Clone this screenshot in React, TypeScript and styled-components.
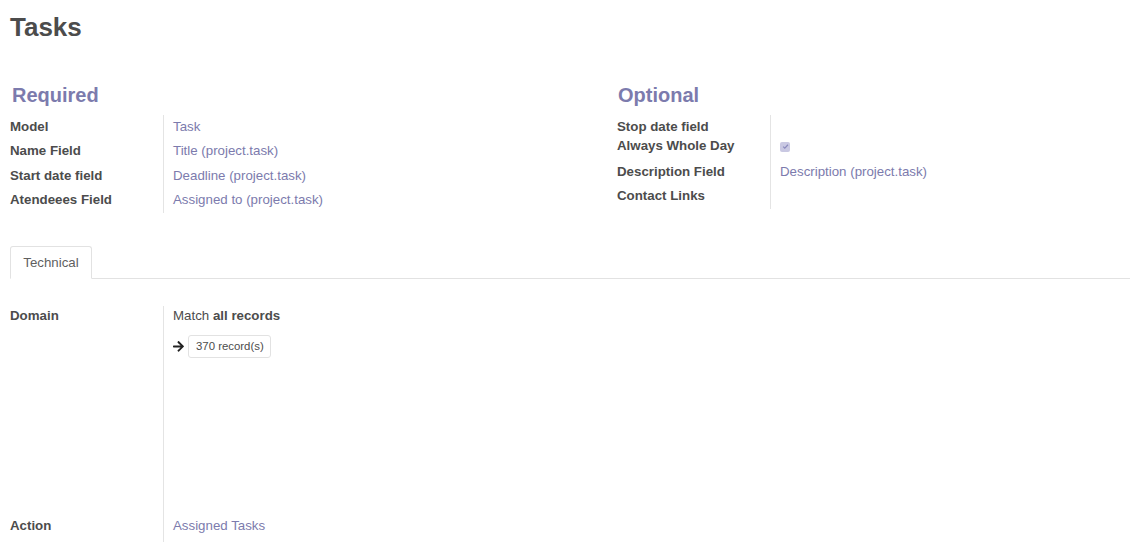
import React from "react";
import styled, { createGlobalStyle } from "styled-components";

const Global = createGlobalStyle`
  html, body { margin: 0; padding: 0; background: #fff; }
  body { font-family: "Liberation Sans", Arial, sans-serif; font-size: 13.3px; color: #4c4c4c; }
  * { box-sizing: border-box; }
`;

const Sheet = styled.div`
  padding: 11px 0 0 10px;
  width: 1130px;
`;

const Title = styled.h1`
  margin: 0;
  font-size: 26px;
  line-height: 32px;
  font-weight: 700;
  color: #4c4c4c;
`;

const Groups = styled.div`
  display: grid;
  grid-template-columns: 607px 1fr;
  margin-top: 39px;
`;

const Group = styled.div`
  display: flex;
  flex-direction: column;
`;

const GroupTitle = styled.h2<{ $indent: number }>`
  margin: 0 0 7px ${(p) => p.$indent}px;
  font-size: 20px;
  line-height: 26px;
  font-weight: 700;
  color: #7c7bad;
`;

const Fields = styled.div`
  display: grid;
  grid-template-columns: 153px 1fr;
`;

const Label = styled.div<{ $h?: number }>`
  font-weight: 700;
  line-height: 20px;
  padding-top: 2px;
  height: ${(p) => (p.$h ? `${p.$h}px` : "24.4px")};
  color: #4c4c4c;
  white-space: nowrap;
`;

const Value = styled.div<{ $h?: number }>`
  border-left: 1px solid #e4e4e4;
  padding: 2px 0 0 9px;
  line-height: 20px;
  height: ${(p) => (p.$h ? `${p.$h}px` : "24.4px")};
  color: #7c7bad;
  white-space: nowrap;
`;

const Check = styled.span`
  display: inline-flex;
  align-items: center;
  justify-content: center;
  width: 10px;
  height: 10px;
  margin-top: 3px;
  border-radius: 2px;
  background: #c9c8e2;
`;

const Tabs = styled.div`
  display: flex;
  margin-top: 33px;
  border-bottom: 1px solid #e2e2e2;
`;

const Tab = styled.div`
  width: 82px;
  height: 33px;
  margin-bottom: -1px;
  border: 1px solid #e2e2e2;
  border-bottom-color: #fff;
  border-radius: 3px 3px 0 0;
  display: flex;
  align-items: center;
  justify-content: center;
  color: #5f5f5f;
  background: #fff;
`;

const TechFields = styled.div`
  display: grid;
  grid-template-columns: 153px 1fr;
  margin-top: 27px;
`;

const DomainValue = styled.div`
  border-left: 1px solid #e4e4e4;
  padding: 0 0 0 9px;
  height: 210px;
  display: flex;
  flex-direction: column;
`;

const TechLabel = styled.div<{ $h: number }>`
  font-weight: 700;
  line-height: 20px;
  height: ${(p) => p.$h}px;
  color: #4c4c4c;
`;

const MatchLine = styled.div`
  line-height: 20px;
  color: #4c4c4c;
  b { font-weight: 700; }
`;

const CountRow = styled.div`
  display: flex;
  align-items: center;
  gap: 4px;
  margin-top: 9px;
`;

const CountButton = styled.span`
  border: 1px solid #e2e2e2;
  border-radius: 3px;
  padding: 0 6px 0 7px;
  height: 23px;
  display: inline-flex;
  align-items: center;
  font-size: 11.4px;
  color: #4c4c4c;
`;

const ActionValue = styled.div`
  border-left: 1px solid #e4e4e4;
  padding-left: 9px;
  line-height: 20px;
  height: 26px;
  color: #7c7bad;
`;

export default function App() {
  return (
    <>
      <Global />
      <Sheet>
        <Title>Tasks</Title>
        <Groups>
          <Group>
            <GroupTitle $indent={2}>Required</GroupTitle>
            <Fields>
              <Label>Model</Label>
              <Value>Task</Value>
              <Label>Name Field</Label>
              <Value>Title (project.task)</Value>
              <Label>Start date field</Label>
              <Value>Deadline (project.task)</Value>
              <Label>Atendeees Field</Label>
              <Value>Assigned to (project.task)</Value>
            </Fields>
          </Group>
          <Group>
            <GroupTitle $indent={1}>Optional</GroupTitle>
            <Fields>
              <Label $h={19}>Stop date field</Label>
              <Value $h={19}></Value>
              <Label $h={26}>Always Whole Day</Label>
              <Value $h={26}>
                <Check>
                  <svg width="7" height="7" viewBox="0 0 8 8">
                    <path d="M1.3 4.2 L3.2 6 L6.8 2" fill="none" stroke="#8a89bd" strokeWidth="1.3" />
                  </svg>
                </Check>
              </Value>
              <Label>Description Field</Label>
              <Value>Description (project.task)</Value>
              <Label>Contact Links</Label>
              <Value></Value>
            </Fields>
          </Group>
        </Groups>
        <Tabs>
          <Tab>Technical</Tab>
        </Tabs>
        <TechFields>
          <TechLabel $h={210}>Domain</TechLabel>
          <DomainValue>
            <MatchLine>
              Match <b>all records</b>
            </MatchLine>
            <CountRow>
              <svg width="11" height="11" viewBox="0 0 448 448">
                <path
                  fill="#222"
                  d="M190 34l22-22c10-10 25-10 34 0l193 193c10 10 10 25 0 34L246 432c-10 10-25 10-34 0l-22-22c-10-10-10-25 0-35l120-114H24c-13 0-24-11-24-24v-32c0-13 11-24 24-24h286L190 69c-10-9-10-25 0-35z"
                />
              </svg>
              <CountButton>370 record(s)</CountButton>
            </CountRow>
          </DomainValue>
          <TechLabel $h={26}>Action</TechLabel>
          <ActionValue>Assigned Tasks</ActionValue>
        </TechFields>
      </Sheet>
    </>
  );
}
